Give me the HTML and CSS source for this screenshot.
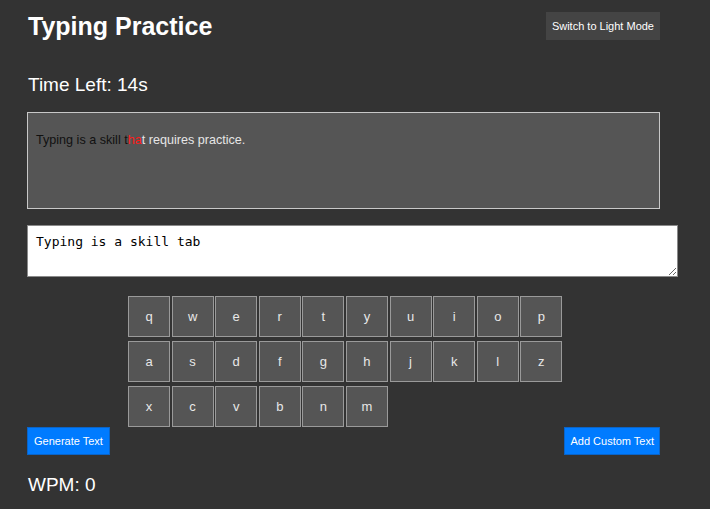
FILE: index.html
```html
<!DOCTYPE html>
<html lang="en">
<head>
<meta charset="utf-8">
<title>Typing Practice</title>
<link rel="stylesheet" href="styles.css">
</head>
<body>
<div class="container">
  <header class="header">
    <h1 class="title">Typing Practice</h1>
    <button class="btn btn-mode">Switch to Light Mode</button>
  </header>
  <div class="timer">Time Left: 14s</div>
  <div class="text-display"><span class="ok">Typing is a skill t</span><span class="bad">ha</span><span class="rest">t requires practice.</span></div>
  <textarea class="input" spellcheck="false">Typing is a skill tab</textarea>
  <div class="keyboard">
    <div class="key">q</div><div class="key">w</div><div class="key">e</div><div class="key">r</div><div class="key">t</div><div class="key">y</div><div class="key">u</div><div class="key">i</div><div class="key">o</div><div class="key">p</div>
    <div class="key">a</div><div class="key">s</div><div class="key">d</div><div class="key">f</div><div class="key">g</div><div class="key">h</div><div class="key">j</div><div class="key">k</div><div class="key">l</div><div class="key">z</div>
    <div class="key">x</div><div class="key">c</div><div class="key">v</div><div class="key">b</div><div class="key">n</div><div class="key">m</div>
  </div>
  <div class="actions">
    <button class="btn btn-blue">Generate Text</button>
    <button class="btn btn-blue btn-custom">Add Custom Text</button>
  </div>
  <div class="wpm">WPM: 0</div>
</div>
</body>
</html>
```
FILE: styles.css
```css
html, body {
  margin: 0;
  padding: 0;
  background: #333333;
}
body {
  font-family: "Liberation Sans", Arial, sans-serif;
  color: #ffffff;
}
.container {
  width: 633px;
  margin-left: 27px;
  padding-top: 12px;
}
.header {
  display: flex;
  justify-content: space-between;
  align-items: center;
  height: 28px;
}
.title {
  margin: 0;
  font-size: 25px;
  font-weight: bold;
  line-height: 30px;
  padding-left: 1px;
  color: #ffffff;
}
.btn {
  font-family: "Liberation Sans", Arial, sans-serif;
  font-size: 11px;
  height: 28px;
  padding: 0 6px;
  cursor: pointer;
  color: #ffffff;
  white-space: nowrap;
}
.btn-mode {
  background: #444444;
  border: none;
}
.btn-blue {
  background: #007bff;
  border: 1px solid #0a64c8;
}
.btn-custom {
  padding: 0 5px;
}
.timer {
  margin-top: 34px;
  font-size: 19px;
  line-height: 22px;
  padding-left: 1px;
}
.text-display {
  margin-top: 16px;
  box-sizing: border-box;
  height: 97px;
  background: #555555;
  border: 1px solid #c8c8c8;
  padding: 20px 8px;
  font-size: 12.6px;
  line-height: 15px;
}
.ok { color: #111111; }
.bad { color: #ff1a1a; }
.rest { color: #e6e6e6; }
.input {
  display: block;
  margin-top: 16px;
  width: 100%;
  height: 34px;
  padding: 8px;
  border: 1px solid #8a8a8a;
  background: #ffffff;
  color: #000000;
  font-family: "DejaVu Sans Mono", monospace;
  font-size: 13px;
  line-height: 15px;
  resize: vertical;
  outline: none;
}
.keyboard {
  margin: 19px 0 0 101px;
  width: 435px;
  display: flex;
  flex-wrap: wrap;
  column-gap: 1.6px;
  row-gap: 4px;
}
.key {
  box-sizing: border-box;
  width: 42px;
  height: 41px;
  background: #555555;
  border: 1px solid #9a9a9a;
  color: #e8e8e8;
  font-size: 13px;
  display: flex;
  align-items: center;
  justify-content: center;
}
.actions {
  display: flex;
  justify-content: space-between;
}
.wpm {
  margin-top: 19px;
  font-size: 19px;
  line-height: 22px;
  padding-left: 1px;
}
```
